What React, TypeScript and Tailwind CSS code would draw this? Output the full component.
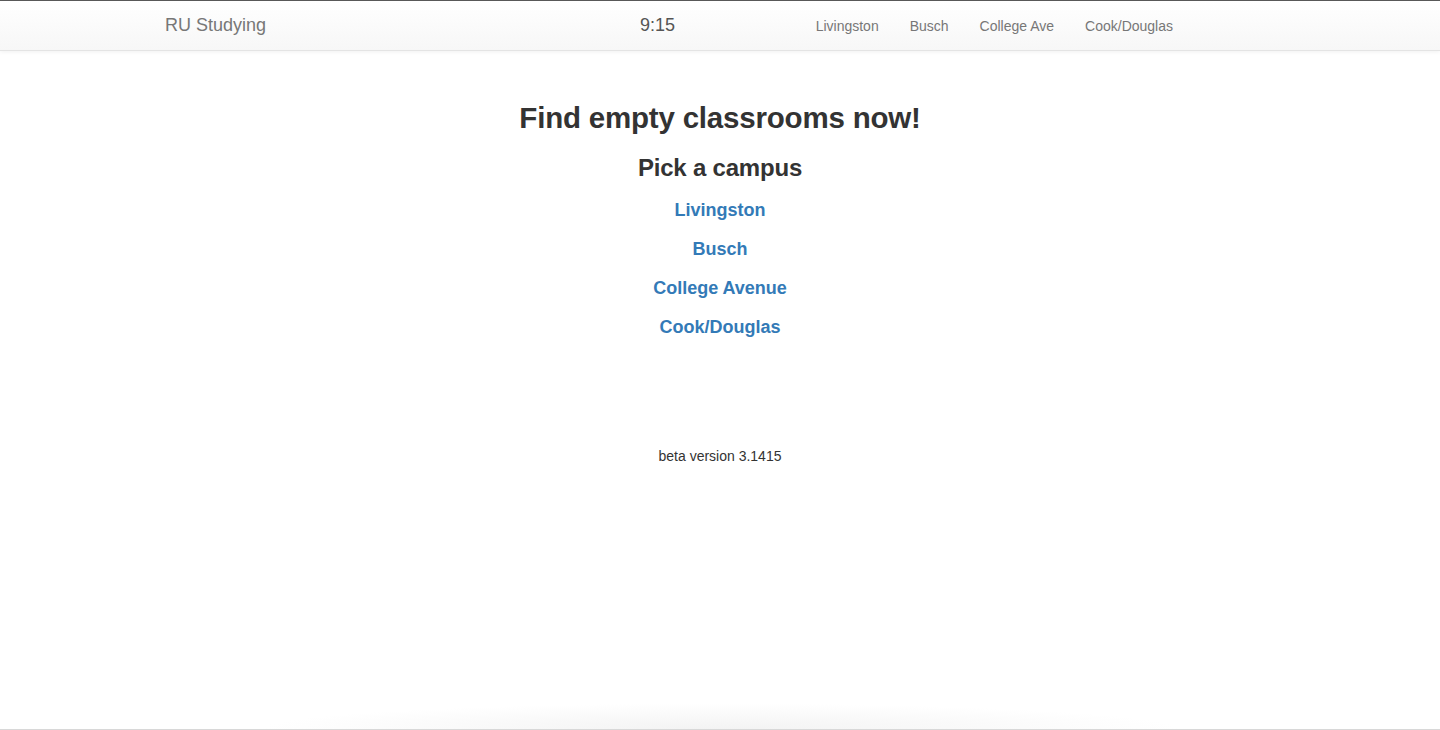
const campuses = ["Livingston", "Busch", "College Avenue", "Cook/Douglas"];
const navLinks = ["Livingston", "Busch", "College Ave", "Cook/Douglas"];

export default function App() {
  return (
    <div
      className="relative flex h-[730px] flex-col overflow-hidden bg-white text-[#333]"
      style={{ fontFamily: '"Liberation Sans", Arial, sans-serif' }}
    >
      <div className="h-px bg-[#5a5a5a]" />

      {/* navbar */}
      <nav className="h-[50px] border-b border-[#e4e4e4] bg-[linear-gradient(to_bottom,#ffffff,#f7f7f7)] shadow-[0_1px_4px_rgba(0,0,0,0.06)]">
        <div className="mx-auto flex h-full w-[1170px] items-center">
          <div className="w-[505px] pl-[30px]">
            <a href="#" className="text-[18px] text-[#777]">
              RU Studying
            </a>
          </div>
          <span className="text-[18px] text-[#555]">9:15</span>
          <ul className="ml-auto flex gap-[31px] pr-[132px]">
            {navLinks.map((l) => (
              <li key={l}>
                <a href="#" className="text-[14px] text-[#777]">
                  {l}
                </a>
              </li>
            ))}
          </ul>
        </div>
      </nav>

      {/* main */}
      <main className="flex flex-col items-center pt-[50px] text-center">
        <h2 className="text-[29.5px] font-bold leading-[33px] tracking-[-0.2px] text-[#333]">
          Find empty classrooms now!
        </h2>
        <h3 className="mt-[21px] text-[24px] font-bold leading-[26px] tracking-[-0.2px] text-[#333]">
          Pick a campus
        </h3>
        <div className="mt-[19px] flex flex-col items-center gap-[19px]">
          {campuses.map((c) => (
            <a key={c} href="#" className="text-[18px] font-bold leading-[20px] text-[#337ab7]">
              {c}
            </a>
          ))}
        </div>
        <p className="mt-[109px] text-[14px] leading-[20px] text-[#333]">beta version 3.1415</p>
      </main>

      <div className="mt-auto h-[40px] bg-[radial-gradient(ellipse_at_bottom,#f3f3f3,rgba(255,255,255,0)_45%)]" />
      <div className="h-px bg-[#d8d8d8]" />
    </div>
  );
}
